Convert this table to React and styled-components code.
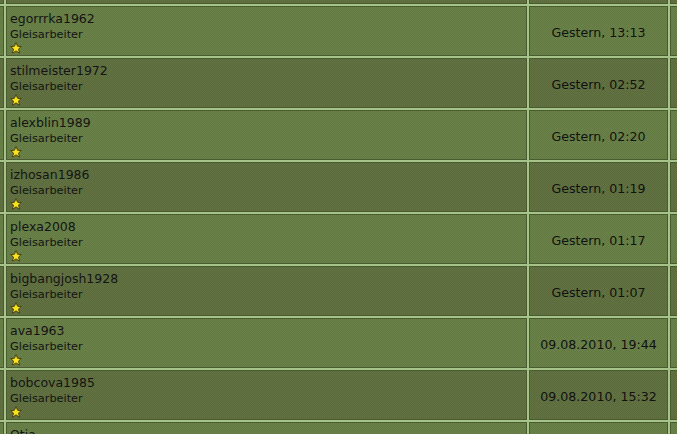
import React from "react";
import styled, { createGlobalStyle } from "styled-components";

const GlobalStyle = createGlobalStyle`
  html, body {
    margin: 0;
    padding: 0;
    overflow: hidden;
    background: #4f6233;
  }
`;

const members = [
  { name: "egorrrka1962", date: "Gestern, 13:13" },
  { name: "stilmeister1972", date: "Gestern, 02:52" },
  { name: "alexblin1989", date: "Gestern, 02:20" },
  { name: "izhosan1986", date: "Gestern, 01:19" },
  { name: "plexa2008", date: "Gestern, 01:17" },
  { name: "bigbangjosh1928", date: "Gestern, 01:07" },
  { name: "ava1963", date: "09.08.2010, 19:44" },
  { name: "bobcova1985", date: "09.08.2010, 15:32" },
  { name: "Otia", date: "09.08.2010, 11:05" },
];

const Viewport = styled.div`
  width: 677px;
  height: 434px;
  overflow: hidden;
`;

const Table = styled.div`
  display: grid;
  grid-template-columns: 20px 521px 139px 40px;
  grid-auto-rows: 50px;
  gap: 2px;
  margin: -46px 0 0 -16px;
  background: #a6c48a;
  font-family: "DejaVu Sans", Verdana, sans-serif;
  color: #111;
`;

const Cell = styled.div`
  box-sizing: border-box;
  border: 1px solid #4a5c2f;
  background-color: ${(p) => (p.$alt ? "#5f703e" : "#677f45")};
  background-image: repeating-conic-gradient(
    rgba(0, 0, 0, 0.06) 0 25%,
    rgba(255, 255, 255, 0.03) 0 50%
  );
  background-size: 2px 2px;
`;

const UserCell = styled(Cell)`
  padding: 3px 3px 0;
  display: flex;
  flex-direction: column;
`;

const DateCell = styled(Cell)`
  display: flex;
  align-items: center;
  justify-content: center;
  font-size: 12.6px;
  padding-top: 2px;
`;

const Name = styled.span`
  font-size: 12.5px;
  line-height: 17px;
  color: #141414;
  white-space: nowrap;
`;

const Title = styled.span`
  font-size: 11.3px;
  line-height: 12px;
  margin-top: 2px;
  color: #141414;
  white-space: nowrap;
`;

const StarBox = styled.span`
  display: block;
  height: 12px;
  margin-top: -2px;
`;

const Star = () => (
  <StarBox>
    <svg width="12" height="12" viewBox="0 0 12 12">
      <polygon
        points="6,0.6 7.6,4.3 11.4,4.5 8.5,7 9.6,11.2 6,8.9 2.4,11.2 3.5,7 0.6,4.5 4.4,4.3"
        fill="#f6e41e"
        stroke="#4f4010"
        strokeWidth="1"
        strokeLinejoin="round"
      />
    </svg>
  </StarBox>
);

export default function App() {
  const rows = [{ name: "", date: "" }, ...members];
  return (
    <Viewport>
      <GlobalStyle />
      <Table>
        {rows.map((m, i) => {
          const alt = i % 2 === 0;
          return (
            <React.Fragment key={i}>
              <Cell $alt={alt} />
              {m.name ? (
                <UserCell $alt={alt}>
                  <Name>{m.name}</Name>
                  <Title>Gleisarbeiter</Title>
                  <Star />
                </UserCell>
              ) : (
                <Cell $alt={alt} />
              )}
              <DateCell $alt={alt}>{m.date}</DateCell>
              <Cell $alt={alt} />
            </React.Fragment>
          );
        })}
      </Table>
    </Viewport>
  );
}
